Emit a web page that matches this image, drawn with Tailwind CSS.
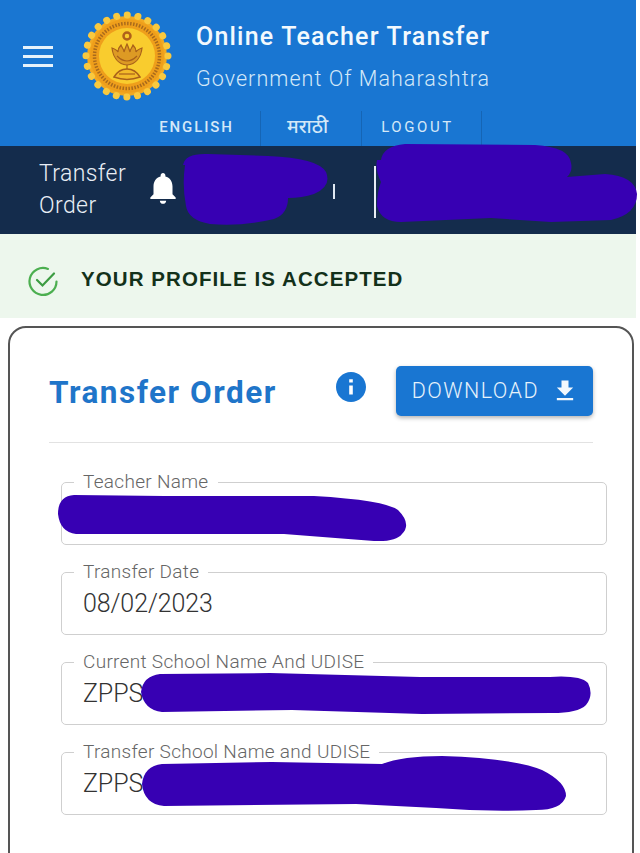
<!DOCTYPE html>
<html lang="en">
<head>
    <meta charset="UTF-8">
    <meta name="viewport" content="width=device-width, initial-scale=1.0">
    <title>Online Teacher Transfer</title>
    <script src="https://cdn.jsdelivr.net/npm/@tailwindcss/browser@4"></script>
</head>
<body class="bg-white font-['Roboto','Liberation_Sans',sans-serif] overflow-hidden">
<div class="relative w-[640px] h-[853px] overflow-hidden">
    <div class="w-[636px]">
        <!-- Blue header -->
        <header class="bg-[#1976d2] h-[146px] text-white">
            <div class="flex items-start h-[111px]">
                <button class="ml-[23px] mt-[46px] w-[30px] flex flex-col gap-[6px]">
                    <span class="block h-[3px] bg-[#e6f2fb]"></span>
                    <span class="block h-[3px] bg-[#e6f2fb]"></span>
                    <span class="block h-[3px] bg-[#e6f2fb]"></span>
                </button>
                <!-- Seal -->
                <svg class="ml-[28px] mt-[10px] w-[92px] h-[92px] blur-[0.5px]" viewBox="0 0 92 92">
                    <circle cx="46" cy="46" r="40" fill="#f2a922"/>
                    <circle cx="46" cy="46" r="41" fill="none" stroke="#f9c93f" stroke-width="7" stroke-linecap="round" stroke-dasharray="0.1 10.63"/>
                    <circle cx="46" cy="46" r="37" fill="#ef9f1b"/>
                    <circle cx="46" cy="46" r="32.5" fill="none" stroke="#a96a1c" stroke-width="3.5" stroke-dasharray="1.5 1.5"/>
                    <circle cx="46" cy="46" r="28" fill="#f9cc2e"/>
                    <circle cx="46" cy="26" r="3.5" fill="none" stroke="#b0601a" stroke-width="2.5"/>
                    <path d="M31 38c1 9 6 16 15 17 9-1 14-8 15-17-3 1-5 2-6 4 0-3-1-5-3-7-1 3-3 4-3 7-1-3-2-6-3-8-1 2-2 5-3 8 0-3-2-4-3-7-2 2-3 4-3 7-1-2-3-3-6-4z" fill="#dd9a24" stroke="#a8601a" stroke-width="1.2"/>
                    <path d="M36 46c3 3 6 5 10 5s7-2 10-5M46 55v5" fill="none" stroke="#a8601a" stroke-width="1.2"/>
                    <path d="M33 67c3-5 8-8 13-8s10 3 13 8c-8 3-18 3-26 0z" fill="#f3bb2a" stroke="#a8601a" stroke-width="1.5"/>
                    <path d="M38 64h16" stroke="#a8601a" stroke-width="1.2"/>
                </svg>
                <div class="ml-[23px] mt-[21px]">
                    <h1 class="text-[25px] leading-[32px] font-medium tracking-[1.2px] text-[#f3f9fd]">Online Teacher Transfer</h1>
                    <p class="mt-[12px] text-[21.5px] leading-[28px] font-light tracking-[1.05px] text-[#d4e8f8]">Government Of Maharashtra</p>
                </div>
            </div>
            <nav class="flex h-[35px] ml-[141px] text-[#d4e8f8]">
                <a class="w-[120px] border-r border-[#1565b5] flex items-center justify-center pr-[8px] pb-[2px] text-[15px] tracking-[1.9px] font-medium">ENGLISH</a>
                <a class="w-[101px] border-r border-[#1565b5] flex items-center justify-center pr-[7px] pb-[5px] text-[19px] font-medium font-['Noto_Sans','Noto_Sans_Devanagari',sans-serif]">मराठी</a>
                <a class="w-[120px] border-r border-[#1565b5] flex items-center justify-center pr-[8px] pb-[2px] text-[15px] tracking-[2.6px]">LOGOUT</a>
            </nav>
        </header>

        <!-- Dark bar -->
        <div class="bg-[#142c4c] h-[88px] flex items-center text-[#e8eef5] relative">
            <p class="ml-[39px] w-[90px] text-[23px] leading-[32px] font-light tracking-[0.4px]">Transfer Order</p>
            <svg class="ml-[15px] w-[38px] h-[38px] mb-[4px]" viewBox="0 0 24 24" fill="#fff">
                <path d="M12 22c1.1 0 2-.9 2-2h-4c0 1.1.9 2 2 2zm6-6v-5c0-3.07-1.63-5.64-4.5-6.32V4c0-.83-.67-1.5-1.5-1.5s-1.5.67-1.5 1.5v.68C7.64 5.36 6 7.92 6 11v5l-2 2v1h16v-1l-2-2z"/>
            </svg>
            <span class="ml-[151px] mt-[3px] w-[2px] h-[15px] bg-[#dfe8f2]"></span>
            <span class="ml-[39px] mt-[3px] w-[2px] h-[52px] bg-[#e8eef5]"></span>
        </div>

        <!-- Accepted alert -->
        <div class="bg-[#edf7ed] h-[84px] flex items-center">
            <svg class="ml-[27px] mt-[9px] w-[32px] h-[32px]" viewBox="0 0 32 32" fill="none" stroke="#4caf50" stroke-linecap="round">
                <path d="M29.5 16.5A13.5 13.5 0 1 1 21 3.9" stroke-width="2.2"/>
                <path d="M10 15l5.5 5.5L27 8.5" stroke="#3c9c42" stroke-width="2.2"/>
            </svg>
            <p class="ml-[22px] mt-[7px] text-[20.5px] font-bold tracking-[1.08px] text-[#13311a] font-['Liberation_Sans',sans-serif]">YOUR PROFILE IS ACCEPTED</p>
        </div>

        <!-- Card -->
        <section class="ml-[8px] mt-[8px] w-[626px] h-[600px] border-2 border-[#555] rounded-[18px] bg-white px-[39px]">
            <div class="flex items-start h-[115px] border-b border-[#e2e2e2]">
                <h2 class="mt-[46px] text-[31.5px] leading-[38px] font-bold tracking-[1.5px] text-[#1f75c9]">Transfer Order</h2>
                <svg class="ml-[56px] mt-[41px] w-[36px] h-[36px]" viewBox="0 0 24 24" fill="#1976d2">
                    <path d="M12 2C6.48 2 2 6.48 2 12s4.48 10 10 10 10-4.48 10-10S17.52 2 12 2zm1.2 15h-2.4v-6h2.4v6zm0-8h-2.4V6.8h2.4V9z"/>
                </svg>
                <button class="ml-[27px] mt-[38px] w-[197px] h-[50px] rounded-[5px] bg-[#1976d2] shadow-[0_2px_4px_rgba(0,0,0,0.3)] flex items-center pl-[16px] text-[21.5px] font-light tracking-[1.45px] text-[#e6f2fb]">
                    DOWNLOAD
                    <svg class="ml-[12px] w-[28px] h-[28px]" viewBox="0 0 24 24" fill="#f2f8fd">
                        <path d="M19 9h-4V3H9v6H5l7 7 7-7zM5 18v2h14v-2H5z"/>
                    </svg>
                </button>
            </div>

            <div class="ml-[12px] mt-[39px] w-[546px] flex flex-col gap-[27px]">
                <fieldset class="h-[72px] -mt-[9px] border-[1.5px] border-[#cfcfcf] rounded-[5px] pl-[12px] pr-3">
                    <legend class="px-[9px] text-[19px] leading-[18px] font-light tracking-[0.3px] text-[#666]">Teacher Name</legend>
                    <div class="h-[38px]"></div>
                </fieldset>
                <fieldset class="h-[72px] -mt-[9px] border-[1.5px] border-[#cfcfcf] rounded-[5px] pl-[12px] pr-3">
                    <legend class="px-[9px] text-[19px] leading-[18px] font-light tracking-[0.3px] text-[#666]">Transfer Date</legend>
                    <div class="pl-[9px] mt-[4px] text-[25px] leading-[38px] font-light tracking-[-0.1px] text-[#333]">08/02/2023</div>
                </fieldset>
                <fieldset class="h-[72px] -mt-[9px] border-[1.5px] border-[#cfcfcf] rounded-[5px] pl-[12px] pr-3">
                    <legend class="px-[9px] text-[19px] leading-[18px] font-light tracking-[0.3px] text-[#666]">Current School Name And UDISE</legend>
                    <div class="pl-[9px] mt-[4px] text-[25px] leading-[38px] font-light tracking-[-0.1px] text-[#333]">ZPPS</div>
                </fieldset>
                <fieldset class="h-[72px] -mt-[9px] border-[1.5px] border-[#cfcfcf] rounded-[5px] pl-[12px] pr-3">
                    <legend class="px-[9px] text-[19px] leading-[18px] font-light tracking-[0.3px] text-[#666]">Transfer School Name and UDISE</legend>
                    <div class="pl-[9px] mt-[4px] text-[25px] leading-[38px] font-light tracking-[-0.1px] text-[#333]">ZPPS</div>
                </fieldset>
            </div>
        </section>
    </div>

    <!-- Marker scribbles over the redacted values -->
    <svg class="absolute top-0 left-0 pointer-events-none" width="640" height="853" viewBox="0 0 640 853" fill="#3700b3">
        <path d="M183 165q2-12 25-11l60 2q50 2 58 16 6 14-12 22-12 4-26 4 0 16-14 21-34 8-64 5-22-4-24-18-4-20-1-41z"/>
        <path d="M381 160q2-14 24-16l130 1q34 2 36 18 2 8-4 14l38-3q30 2 32 20 0 20-26 26l-60 2-60-4-90 4q-20 0-24-16 0-14 4-24-6-12-4-22z"/>
        <path d="M74 495l90 1 150 0q70 4 84 14 14 14 4 24-6 8-28 7l-90-7H76q-16-2-18-20 0-18 16-19z"/>
        <path d="M160 674l110-1 150 4h130q30-2 38 6 6 12-2 22-8 8-34 8l-130 1-130-4-130 2q-18-2-21-20 2-16 19-18z"/>
        <path d="M162 764l110-2 110 2q20-8 60-8 70 2 100 14 24 12 24 26-4 14-30 14-50 2-100-2l-80-4-192 2q-20-2-22-22 2-18 20-20z"/>
    </svg>
</div>
</body>
</html>
